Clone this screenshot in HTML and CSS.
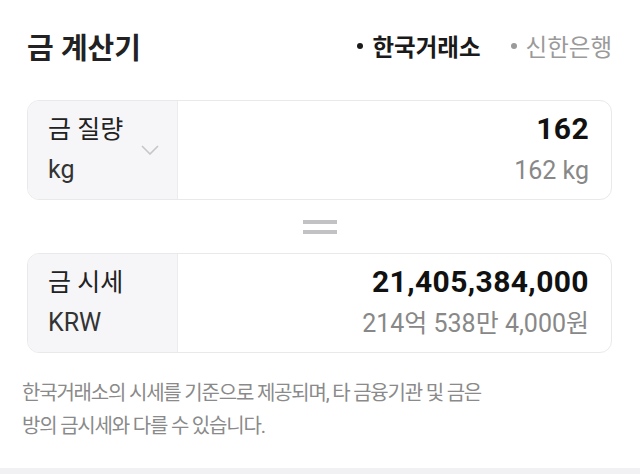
FILE: index.html
```html
<!DOCTYPE html>
<html lang="ko">
<head>
<meta charset="utf-8">
<link rel="stylesheet" href="styles.css">
</head>
<body>
<div class="page">
  <header class="header">
    <h1 class="title">금 계산기</h1>
    <nav class="tabs">
      <span class="tab tab-active"><span class="dot"></span>한국거래소</span>
      <span class="tab"><span class="dot"></span>신한은행</span>
    </nav>
  </header>

  <section class="card">
    <div class="card-label">
      <div class="label-text">
        <div class="label-main">금 질량</div>
        <div class="label-unit">kg</div>
      </div>
      <svg class="chevron" width="18" height="10" viewBox="0 0 18 10"><path d="M1 1 L9 9 L17 1" fill="none" stroke="#c6c6c8" stroke-width="1.6"/></svg>
    </div>
    <div class="card-value">
      <div class="value-main">162</div>
      <div class="value-sub">162 kg</div>
    </div>
  </section>

  <div class="equals"><span class="eq-bar"></span><span class="eq-bar"></span></div>

  <section class="card">
    <div class="card-label">
      <div class="label-text">
        <div class="label-main">금 시세</div>
        <div class="label-unit">KRW</div>
      </div>
    </div>
    <div class="card-value">
      <div class="value-main">21,405,384,000</div>
      <div class="value-sub">214억 538만 4,000원</div>
    </div>
  </section>

  <p class="note">한국거래소의 시세를 기준으로 제공되며, 타 금융기관 및 금은<br>방의 금시세와 다를 수 있습니다.</p>
</div>
<div class="bottom-strip"></div>
</body>
</html>
```

FILE: styles.css
```css
* { box-sizing: border-box; }
html, body { margin: 0; padding: 0; background: #fff; }
body {
  font-family: Roboto, "Noto Sans CJK KR", sans-serif;
  color: #222;
  width: 640px;
  height: 474px;
  overflow: hidden;
  display: flex;
  flex-direction: column;
}
.page {
  flex: 1;
  padding: 0 28px 0 27px;
}
.header {
  height: 100px;
  display: flex;
  align-items: center;
  justify-content: space-between;
  padding-bottom: 8px;
}
.title {
  margin: 0;
  font-size: 29px;
  font-weight: 700;
  color: #222;
}
.tabs {
  display: flex;
  gap: 30px;
}
.tab {
  display: flex;
  align-items: center;
  font-size: 23.5px;
  color: #9a9a9a;
}
.tab-active { color: #1a1a1a; font-weight: 700; }
.dot {
  width: 6px; height: 6px; border-radius: 50%;
  background: currentColor;
  margin-right: 9px;
}
.card {
  height: 100px;
  border: 1px solid #e9e9eb;
  border-radius: 12px;
  display: flex;
  overflow: hidden;
}
.card-label {
  width: 150px;
  background: #f6f6f8;
  border-right: 1px solid #ececee;
  display: flex;
  align-items: center;
  padding-left: 20px;
  gap: 18px;
}
.label-text { display: flex; flex-direction: column; }
.label-main {
  font-size: 25px;
  line-height: 40px;
  color: #222;
}
.label-unit {
  font-size: 25px;
  line-height: 40px;
  color: #333;
}
.card-value {
  flex: 1;
  display: flex;
  flex-direction: column;
  align-items: flex-end;
  justify-content: center;
  padding-right: 22px;
}
.value-main {
  font-size: 30px;
  font-weight: 700;
  letter-spacing: 0.4px;
  line-height: 40px;
  margin-top: 2px;
  color: #111;
}
.value-sub {
  font-size: 25px;
  line-height: 44px;
  color: #888;
}
.equals {
  height: 53px;
  display: flex;
  flex-direction: column;
  align-items: center;
  justify-content: center;
  gap: 6px;
}
.eq-bar {
  width: 34px;
  height: 4px;
  background: #c2c2c4;
}
.note {
  margin: 24px 0 0 -5px;
  font-size: 20px;
  letter-spacing: -1.2px;
  line-height: 33px;
  color: #8a8a8a;
}
.bottom-strip {
  height: 6px;
  background: #f1f1f3;
}
```
